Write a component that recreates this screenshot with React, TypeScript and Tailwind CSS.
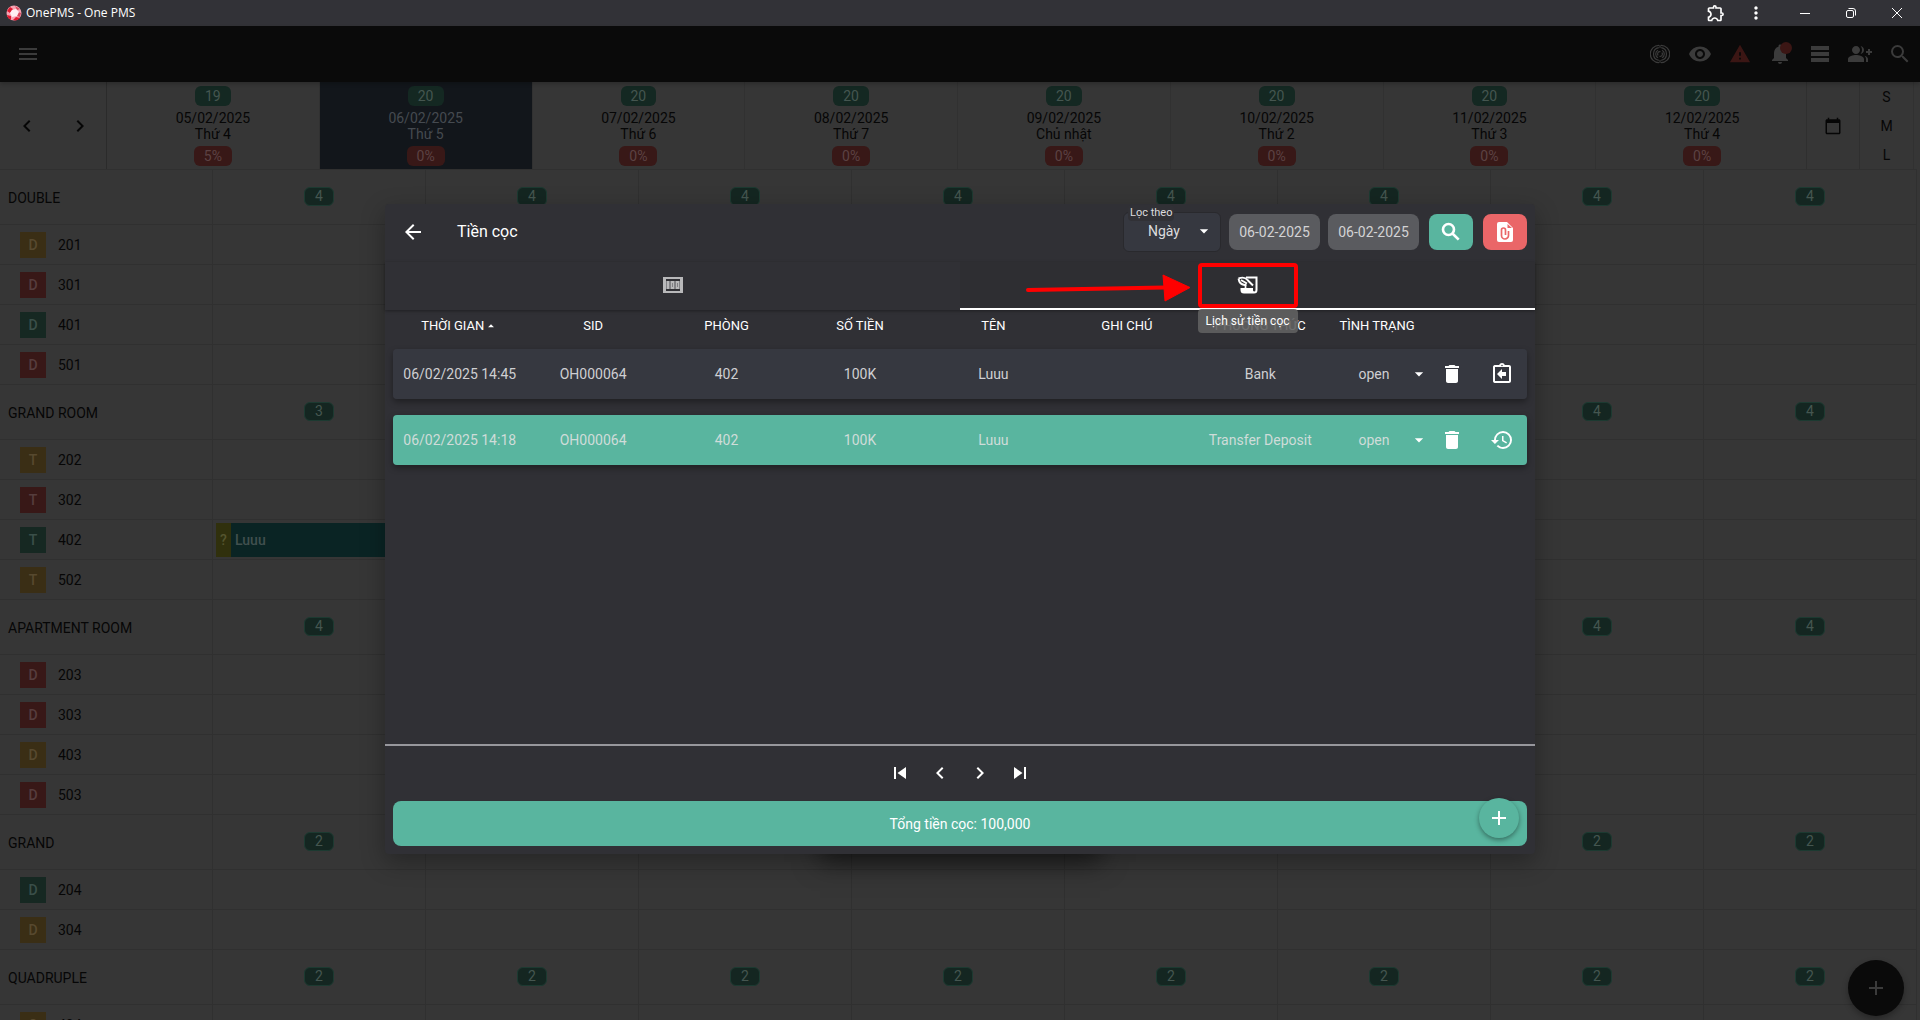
import { clsx } from 'clsx';
import {
  MdAdd, MdArrowBack, MdArrowDropDown, MdArrowDropUp, MdCalendarToday, MdChevronLeft,
  MdChevronRight, MdDelete, MdGroupAdd, MdHistory, MdMenu, MdMoreVert, MdNotifications,
  MdOutlineAssignmentReturn, MdOutlineExtension, MdSearch, MdSkipNext, MdSkipPrevious,
  MdTableRows, MdVisibility, MdWarning,
} from 'react-icons/md';

type Tone = 'yellow' | 'red' | 'green';

const days = [
  { date: '05/02/2025', day: 'Thứ 4', free: 19, rate: '5%' },
  { date: '06/02/2025', day: 'Thứ 5', free: 20, rate: '0%', today: true },
  { date: '07/02/2025', day: 'Thứ 6', free: 20, rate: '0%' },
  { date: '08/02/2025', day: 'Thứ 7', free: 20, rate: '0%' },
  { date: '09/02/2025', day: 'Chủ nhật', free: 20, rate: '0%' },
  { date: '10/02/2025', day: 'Thứ 2', free: 20, rate: '0%' },
  { date: '11/02/2025', day: 'Thứ 3', free: 20, rate: '0%' },
  { date: '12/02/2025', day: 'Thứ 4', free: 20, rate: '0%' },
];

const groups: { name: string; free: number[]; rooms: { no: string; type: string; tone: Tone; guest?: string }[] }[] = [
  {
    name: 'DOUBLE',
    free: [4, 4, 4, 4, 4, 4, 4, 4],
    rooms: [
      { no: '201', type: 'D', tone: 'yellow' },
      { no: '301', type: 'D', tone: 'red' },
      { no: '401', type: 'D', tone: 'green' },
      { no: '501', type: 'D', tone: 'red' },
    ],
  },
  {
    name: 'GRAND ROOM',
    free: [3, 4, 4, 4, 4, 4, 4, 4],
    rooms: [
      { no: '202', type: 'T', tone: 'yellow' },
      { no: '302', type: 'T', tone: 'red' },
      { no: '402', type: 'T', tone: 'green', guest: 'Luuu' },
      { no: '502', type: 'T', tone: 'yellow' },
    ],
  },
  {
    name: 'APARTMENT ROOM',
    free: [4, 4, 4, 4, 4, 4, 4, 4],
    rooms: [
      { no: '203', type: 'D', tone: 'red' },
      { no: '303', type: 'D', tone: 'red' },
      { no: '403', type: 'D', tone: 'yellow' },
      { no: '503', type: 'D', tone: 'red' },
    ],
  },
  {
    name: 'GRAND',
    free: [2, 2, 2, 2, 2, 2, 2, 2],
    rooms: [
      { no: '204', type: 'D', tone: 'green' },
      { no: '304', type: 'D', tone: 'yellow' },
    ],
  },
  {
    name: 'QUADRUPLE',
    free: [2, 2, 2, 2, 2, 2, 2, 2],
    rooms: [{ no: '404', type: 'Q', tone: 'yellow' }],
  },
];

const deposits = [
  { time: '06/02/2025 14:45', sid: 'OH000064', room: '402', amount: '100K', name: 'Luuu', note: '', method: 'Bank', done: false },
  { time: '06/02/2025 14:18', sid: 'OH000064', room: '402', amount: '100K', name: 'Luuu', note: '', method: 'Transfer Deposit', done: true },
];

const toneClass: Record<Tone, string> = {
  yellow: 'bg-[#3a2e15] text-[#57492f]',
  red: 'bg-[#381817] text-[#563d3d]',
  green: 'bg-[#162822] text-[#3a4f49]',
};

function TitleBar() {
  return (
    <div className="flex h-[26px] items-center bg-[#323237] text-white">
      <svg className="ml-1.5 size-4" viewBox="0 0 16 16">
        <circle cx="8" cy="8" r="7.5" fill="#f7a3b3" />
        <path d="M1 6l3-4 3 2-3 4zM1 10l4 1v4C3 14 1 12 1 10zM7 15l3-3 4 1c-2 2-4 3-7 2z" fill="#e0192f" />
        <path d="M9 1l5 3-3 1zM12 7l3 1-1 4-3-1z" fill="#d8485d" />
        <path d="M6 5l4-1 3 3-2 4-5 1-2-4z" fill="#fff0f3" />
      </svg>
      <span className="ml-1 font-['Open_Sans',sans-serif] text-xs">OnePMS - One PMS</span>
      <div className="ml-auto flex h-full items-center">
        <button aria-label="Extensions" className="grid h-full w-10 place-items-center"><MdOutlineExtension className="size-5" /></button>
        <button aria-label="More" className="grid h-full w-10 place-items-center"><MdMoreVert className="size-5" /></button>
        <button aria-label="Minimize" className="ml-1.5 grid h-full w-[46px] place-items-center">
          <svg className="size-[10px]" viewBox="0 0 10 10"><path d="M0 5.5h10" stroke="#fff" /></svg>
        </button>
        <button aria-label="Restore" className="grid h-full w-[46px] place-items-center">
          <svg className="size-[10px]" viewBox="0 0 10 10" fill="none" stroke="#fff">
            <rect x=".5" y="2.5" width="7" height="7" rx="1.5" />
            <path d="M2.5.5H7A2.5 2.5 0 0 1 9.5 3v4.5" />
          </svg>
        </button>
        <button aria-label="Close" className="grid h-full w-[46px] place-items-center">
          <svg className="size-[10px]" viewBox="0 0 10 10"><path d="M0 0l10 10M10 0L0 10" stroke="#fff" /></svg>
        </button>
      </div>
    </div>
  );
}

function RadarIcon() {
  return (
    <svg className="size-5" viewBox="0 0 20 20" fill="none" stroke="currentColor" strokeWidth="1.2">
      <path d="M9 1.3a8.7 8.7 0 0 0 0 17.4M11 1.3a8.7 8.7 0 0 1 0 17.4" />
      <path d="M8.8 3.7a6.4 6.4 0 0 0 0 12.6M11.2 3.7a6.4 6.4 0 0 1 0 12.6" />
      <path d="M8 6.2a4.3 4.3 0 0 0 0 7.6M12 6.2a4.3 4.3 0 0 1 0 7.6" />
      <path d="M8.2 11.500a2.300 2.300 0 0 1 2.300-3.800M11.800 8.500a2.300 2.300 0 0 1-2.300 3.800" />
      <path d="M10 1v3M10 16v3" />
    </svg>
  );
}

function BanknoteIcon() {
  return (
    <svg className="size-6" viewBox="0 0 24 24" fill="currentColor">
      <path d="M2 4h20v16H2zM5 6v12h14V6z" fillRule="evenodd" />
      <path d="M4 8h16v8H4z" opacity=".6" />
      <path d="M6 8h2v8H6zM10 8h3v8h-3zm1 2v4h1v-4zM15 8h3v8h-3zm1 2v4h1v-4z" fillRule="evenodd" />
    </svg>
  );
}

function QuillScrollIcon() {
  return (
    <svg className="size-6" viewBox="0 0 24 24" fill="none" stroke="currentColor">
      <path d="M10 4.500h10.500V17a2.500 2.500 0 0 1-2.500 2.500H8a2.500 2.500 0 0 1-2.500-2.500v-2" strokeWidth="2" />
      <path d="M5 15h12v2.500l1 1.500H7.500A2.500 2.500 0 0 1 5 16.500z" fill="currentColor" stroke="none" />
      <path d="M2.500 5.500c4-1.500 7-1 9 1.500l5.500 5.500M2.500 5.500c.5 3.500 2.500 6 6 6.500l2-.5M5 7l6 3.500" strokeWidth="1.900" />
      <path d="M9.500 15v-3" strokeWidth="1.700" />
    </svg>
  );
}

function SearchBoldIcon() {
  return (
    <svg className="size-6" viewBox="0 0 24 24" fill="none" stroke="currentColor" strokeWidth="2.600">
      <circle cx="9.500" cy="9.500" r="5.500" />
      <path d="M13.500 13.500l6.200 6.200" />
    </svg>
  );
}

function FileClipIcon() {
  return (
    <svg className="size-6" viewBox="0 0 24 24">
      <path d="M14 2H6a2 2 0 0 0-2 2v16a2 2 0 0 0 2 2h12a2 2 0 0 0 2-2V8z" fill="#fff" />
      <path d="M14.5 4v4H19z" fill="#ea6668" />
      <path d="M15.5 11v4.500a3.500 3.500 0 0 1-7 0V10a2 2 0 0 1 4 0v5" fill="none" stroke="#ea6668" strokeWidth="1.7" />
    </svg>
  );
}

function AppBar() {
  return (
    <header className="relative flex h-14 items-center bg-[#0a0a0a] pl-2 text-[#3b3b3b] shadow-[0_2px_4px_rgba(0,0,0,0.2)]">
      <button aria-label="Menu" className="grid size-10 place-items-center"><MdMenu className="size-6" /></button>
      <div className="ml-auto flex items-center">
        <button aria-label="Radar" className="grid size-10 place-items-center"><RadarIcon /></button>
        <button aria-label="View" className="grid size-10 place-items-center"><MdVisibility className="size-6" /></button>
        <button aria-label="Warnings" className="grid size-10 place-items-center text-[#3b1614]"><MdWarning className="size-[22px]" /></button>
        <button aria-label="Notifications" className="relative grid size-10 place-items-center">
          <MdNotifications className="size-6" />
          <span className="absolute top-2 right-2 size-3 rounded-full bg-[#3b1614]" />
        </button>
        <button aria-label="Rows" className="grid size-10 place-items-center"><MdTableRows className="size-6" /></button>
        <button aria-label="Add guests" className="grid size-10 place-items-center"><MdGroupAdd className="size-6" /></button>
        <button aria-label="Search" className="grid size-10 place-items-center"><MdSearch className="size-6" /></button>
      </div>
    </header>
  );
}

function DayHeader() {
  return (
    <div className="flex h-[88px] border-b border-[#303030] pr-[3px]">
      <div className="flex w-[107px] shrink-0 items-center justify-around border-r border-[#2b2b2b]">
        <button aria-label="Previous days"><MdChevronLeft className="size-6" /></button>
        <button aria-label="Next days"><MdChevronRight className="size-6" /></button>
      </div>
      {days.map(({ date, day, free, rate, today }) => (
        <div
          key={date}
          className={clsx(
            'flex flex-1 flex-col items-center border-r border-[#313131] pt-1 leading-4',
            today && 'bg-[#12161b] text-[#454a50]',
          )}
        >
          <span className="h-5 rounded-md bg-[#142822] px-2.5 leading-5 text-[#455650]">{free}</span>
          <span className="mt-1">{date}</span>
          <span>{day}</span>
          <span className="mt-1 h-5 rounded-md bg-[#381817] px-2.5 leading-5 text-[#5c4243]">{rate}</span>
        </div>
      ))}
      <button aria-label="Pick a date" className="-ml-[3px] grid w-[54px] shrink-0 place-items-center border-x border-[#2f2f2f] bg-[#363636]">
        <MdCalendarToday className="size-[18px]" />
      </button>
      <div className="flex w-[54px] shrink-0 flex-col items-center justify-around border-r border-[#313131]">
        <button>S</button>
        <button>M</button>
        <button>L</button>
      </div>
    </div>
  );
}

function RoomGrid() {
  return (
    <div>
      {groups.map((group) => (
        <div key={group.name}>
          <div className="grid h-[55px] grid-cols-9 border-b border-[#303030]">
            <div className="flex items-center border-r border-[#303030] pt-0.5 pl-2">{group.name}</div>
            {group.free.map((count, i) => (
              <div key={i} className="grid place-items-center border-r border-[#303030] pb-0.5">
                <span className="h-[19px] w-[30px] rounded-md border border-[#1c3a31] bg-[#142621] text-center leading-[17px] text-[#455650]">{count}</span>
              </div>
            ))}
          </div>
          {group.rooms.map((room) => (
            <div key={room.no} className="grid h-10 grid-cols-9 border-b border-[#303030]">
              <div className="flex items-center gap-3 border-r border-[#303030] pl-5">
                <span className={clsx('size-[26px] text-center font-medium leading-[26px]', toneClass[room.tone])}>{room.type}</span>
                {room.no}
              </div>
              {days.map((d, i) => (
                <div key={d.date} className="border-r border-[#303030] py-[3px] pl-[3px]">
                  {room.guest && i === 0 && (
                    <div className="flex h-[34px] w-full bg-[#0a2424] font-medium leading-[34px] text-[#41504f]">
                      <span className="w-[15px] bg-[#30300d] text-center text-[#55552f]">?</span>
                      <span className="pl-1">{room.guest}</span>
                    </div>
                  )}
                </div>
              ))}
            </div>
          ))}
        </div>
      ))}
    </div>
  );
}

function DialogToolbar() {
  return (
    <div className="flex h-[58px] items-center pr-2 pb-0.5">
      <button aria-label="Back" className="ml-2 grid size-10 place-items-center"><MdArrowBack className="size-6" /></button>
      <h1 className="ml-6 text-base">Tiền cọc</h1>
      <div className="relative ml-auto h-10 w-[98px] rounded-md border border-[#29292d] bg-[#363840] text-[#dcdcde]">
        <label htmlFor="filter" className="absolute -top-2 left-1 rounded bg-[#313136] px-0.5 text-[11px] leading-4">Lọc theo</label>
        <select id="filter" className="h-full w-full appearance-none pr-4 pb-0.5 [text-align-last:center]">
          <option>Ngày</option>
        </select>
        <MdArrowDropDown className="pointer-events-none absolute top-2 right-1.5 size-5 text-white" />
      </div>
      <input aria-label="Từ ngày" defaultValue="06-02-2025" className="ml-2 h-9 w-[91px] rounded-lg bg-[#5a5b5f] text-center text-[#d3d3d5]" />
      <input aria-label="Đến ngày" defaultValue="06-02-2025" className="ml-2 h-9 w-[91px] rounded-lg bg-[#5a5b5f] text-center text-[#d3d3d5]" />
      <button aria-label="Search" className="ml-2.5 grid h-9 w-11 place-items-center rounded-lg bg-[#59b59f]"><SearchBoldIcon /></button>
      <button aria-label="Export" className="ml-2.5 grid h-9 w-11 place-items-center rounded-lg bg-[#ea6668]"><FileClipIcon /></button>
    </div>
  );
}

function DialogTabs() {
  return (
    <div className="relative grid h-12 grid-cols-2 shadow-[0_1px_3px_rgba(0,0,0,0.35)]">
      <button aria-label="Tiền cọc" className="grid place-items-center pb-0.5 text-[#b8b8ba]"><BanknoteIcon /></button>
      <button aria-label="Lịch sử tiền cọc" className="relative flex items-center justify-center border-b-2 border-white bg-[#2e2e32]">
        <QuillScrollIcon />
        {/* callout around the active tab */}
        <span className="absolute top-px left-1/2 h-[45px] w-[100px] -translate-x-1/2 rounded-sm border-4 border-[#ff0000]" />
        <svg className="absolute top-3 right-1/2 mr-[57px] h-7 w-[166px]" viewBox="0 0 166 28">
          <path d="M3 16L140 13.5" stroke="#ff0000" strokeWidth="4" strokeLinecap="round" />
          <path d="M138 1l27 12.5L140 27z" fill="#ff0000" stroke="#ff0000" strokeLinejoin="round" />
        </svg>
        <span role="tooltip" className="absolute top-[47px] left-1/2 z-10 h-6 w-[100px] -translate-x-1/2 rounded bg-[#616161]/90 text-center text-xs leading-6 whitespace-nowrap">
          Lịch sử tiền cọc
        </span>
      </button>
    </div>
  );
}

function DepositTable() {
  return (
    <table className="-mt-4 w-full table-fixed border-separate border-spacing-x-0 border-spacing-y-4 text-center">
      <colgroup>
        <col /><col /><col /><col /><col /><col /><col />
        <col className="w-[100px]" /><col className="w-[50px]" /><col className="w-[50px]" />
      </colgroup>
      <thead>
        <tr className="h-[23px] text-[13px] leading-[15px] whitespace-nowrap [&>th]:p-0 [&>th]:pt-2 [&>th]:font-normal">
          <th><button className="inline-flex items-center">THỜI GIAN<MdArrowDropUp className="size-3.5" /></button></th>
          <th>SID</th>
          <th>PHÒNG</th>
          <th>SỐ TIỀN</th>
          <th>TÊN</th>
          <th>GHI CHÚ</th>
          <th>PHƯƠNG THỨC</th>
          <th>TÌNH TRẠNG</th>
          <th aria-label="Xóa" />
          <th aria-label="Hoàn cọc" />
        </tr>
      </thead>
      <tbody>
        {deposits.map((row) => (
          <tr
            key={row.time}
            className={clsx(
              'h-[50px] rounded shadow-[0_3px_6px_rgba(0,0,0,0.35)] [&>td]:p-0 [&>td:first-child]:rounded-l [&>td:last-child]:rounded-r',
              row.done ? 'text-[#cfdcd9] [&>td]:bg-[#59b59f]' : 'text-[#cfcfd2] [&>td]:bg-[#363840]',
            )}
          >
            <td>{row.time}</td>
            <td>{row.sid}</td>
            <td>{row.room}</td>
            <td>{row.amount}</td>
            <td>{row.name}</td>
            <td>{row.note}</td>
            <td>{row.method}</td>
            <td>
              <div className="relative">
                <select aria-label="Tình trạng" className="w-full appearance-none pr-1.5 [text-align-last:center]">
                  <option>open</option>
                </select>
                <MdArrowDropDown className="pointer-events-none absolute top-0 -right-0.5 size-5 text-white" />
              </div>
            </td>
            <td><button aria-label="Xóa" className="align-middle text-white"><MdDelete className="size-6" /></button></td>
            <td>
              <button aria-label={row.done ? 'Lịch sử' : 'Hoàn cọc'} className="align-middle text-white">
                {row.done ? <MdHistory className="size-6" /> : <MdOutlineAssignmentReturn className="size-6" />}
              </button>
            </td>
          </tr>
        ))}
      </tbody>
    </table>
  );
}

function DepositDialog() {
  return (
    <div className="relative w-[1150px]">
      {/* smaller dialog stacked underneath, only its shadow shows */}
      <div className="absolute bottom-0 left-1/2 h-40 w-[280px] -translate-x-1/2 shadow-[0_8px_24px_rgba(0,0,0,0.5)]" />
      <section role="dialog" aria-label="Tiền cọc" className="relative flex h-[650px] flex-col rounded-sm bg-[#303035] text-white shadow-[0_8px_24px_rgba(0,0,0,0.3)]">
        <DialogToolbar />
        <DialogTabs />
        <div className="flex-1 px-2"><DepositTable /></div>
        <div className="flex h-[57px] items-center justify-center border-t-2 border-[#97979c] pb-0.5">
          <button aria-label="Trang đầu" className="grid size-10 place-items-center"><MdSkipPrevious className="size-6" /></button>
          <button aria-label="Trang trước" className="grid size-10 place-items-center"><MdChevronLeft className="size-6" /></button>
          <button aria-label="Trang sau" className="grid size-10 place-items-center"><MdChevronRight className="size-6" /></button>
          <button aria-label="Trang cuối" className="grid size-10 place-items-center"><MdSkipNext className="size-6" /></button>
        </div>
        <div className="relative m-2 mt-0 h-[45px] rounded-lg bg-[#59b59f] text-center leading-[46px]">
          Tổng tiền cọc: 100,000
          <button aria-label="Thêm tiền cọc" className="absolute -top-[3px] right-2 grid size-10 place-items-center rounded-full bg-[#59b59f] shadow-[0_2px_5px_rgba(0,0,0,0.4)]">
            <MdAdd className="size-6" />
          </button>
        </div>
      </section>
    </div>
  );
}

export default function App() {
  return (
    <div className="relative h-screen overflow-hidden bg-[#363636] font-[Roboto,sans-serif] text-sm text-[#060606]">
      <TitleBar />
      <AppBar />
      <main className="mr-[3px]">
        <DayHeader />
        <RoomGrid />
      </main>
      <button aria-label="Add booking" className="absolute right-4 bottom-1 grid size-14 place-items-center rounded-full bg-[#0a0a0a] text-[#3b3b3b] shadow-[0_3px_6px_rgba(0,0,0,0.3)]">
        <MdAdd className="size-6" />
      </button>
      <div className="absolute inset-0 flex items-center justify-center pt-[38px]">
        <DepositDialog />
      </div>
    </div>
  );
}
